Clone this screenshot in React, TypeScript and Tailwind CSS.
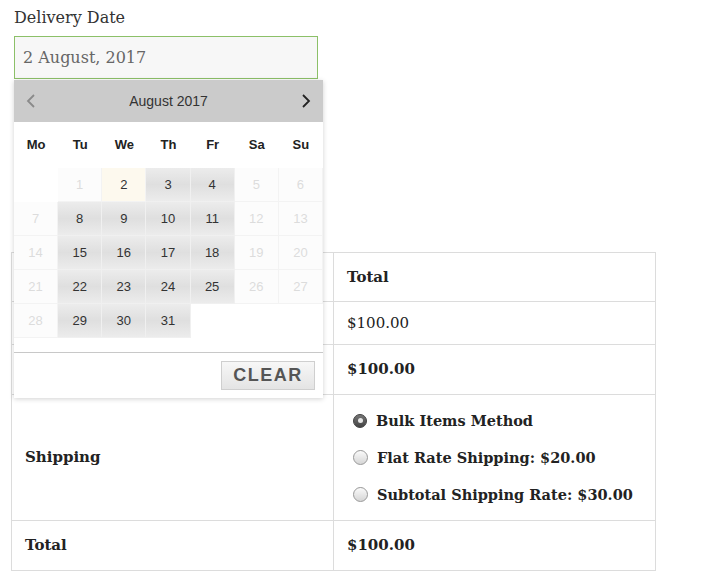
import React from 'react';

const serif = { fontFamily: '"DejaVu Serif", "Liberation Serif", serif' };
const sans = { fontFamily: '"Liberation Sans", Arial, sans-serif' };

const weekDays = ['Mo', 'Tu', 'We', 'Th', 'Fr', 'Sa', 'Su'];

// null = empty cell, otherwise [day, enabled]
const weeks: (null | [number, boolean])[][] = [
  [null, [1, false], [2, true], [3, true], [4, true], [5, false], [6, false]],
  [[7, false], [8, true], [9, true], [10, true], [11, true], [12, false], [13, false]],
  [[14, false], [15, true], [16, true], [17, true], [18, true], [19, false], [20, false]],
  [[21, false], [22, true], [23, true], [24, true], [25, true], [26, false], [27, false]],
  [[28, false], [29, true], [30, true], [31, true], null, null, null],
];

function DayCell({ cell }: { cell: null | [number, boolean] }) {
  if (!cell) {
    return <div className="h-[34px] bg-white" />;
  }
  const [day, enabled] = cell;
  if (day === 2) {
    return (
      <div className="h-[34px] flex items-center justify-center bg-[#fdf9ee] text-[13px] text-[#333] border-r border-b border-[#f3f3f3]">
        {day}
      </div>
    );
  }
  if (enabled) {
    return (
      <div className="h-[34px] flex items-center justify-center bg-gradient-to-b from-[#ececec] via-[#dfdfdf] to-[#ececec] text-[13px] text-[#333] border-r border-b border-[#f0f0f0]">
        {day}
      </div>
    );
  }
  return (
    <div className="h-[34px] flex items-center justify-center bg-[#fcfcfc] text-[13px] text-[#dcdcdc] border-r border-b border-[#f3f3f3]">
      {day}
    </div>
  );
}

function Calendar() {
  return (
    <div
      className="absolute left-[14px] top-[80px] w-[309px] bg-white shadow-[0_1px_5px_rgba(0,0,0,0.18)] z-10"
      style={sans}
    >
      <div className="h-[42px] bg-[#cbcbcb] flex items-center justify-between px-[10px]">
        <svg width="14" height="16" viewBox="0 0 14 16" fill="none">
          <path d="M10 2 L4 8 L10 14" stroke="#8a8a8a" strokeWidth="1.8" />
        </svg>
        <span className="text-[14px] text-[#333]">August 2017</span>
        <svg width="14" height="16" viewBox="0 0 14 16" fill="none">
          <path d="M4 2 L10 8 L4 14" stroke="#222" strokeWidth="1.8" />
        </svg>
      </div>
      <div className="grid grid-cols-7 h-[46px] items-center">
        {weekDays.map((d) => (
          <div key={d} className="text-center text-[13px] font-bold text-[#222]">
            {d}
          </div>
        ))}
      </div>
      <div className="grid grid-cols-7">
        {weeks.flat().map((cell, i) => (
          <DayCell key={i} cell={cell} />
        ))}
      </div>
      <div className="h-[14px]" />
      <div className="border-t border-[#c8c8c8] h-[46px] flex items-center justify-end pr-[8px]">
        <button
          type="button"
          className="w-[94px] h-[29px] border border-[#cfcfcf] bg-gradient-to-b from-[#f7f7f7] to-[#e4e4e4] text-[18px] font-bold tracking-[1.5px] text-[#555]"
        >
          CLEAR
        </button>
      </div>
    </div>
  );
}

function Radio({ checked }: { checked?: boolean }) {
  if (checked) {
    return (
      <span className="w-[14px] h-[14px] rounded-full bg-gradient-to-b from-[#777] to-[#444] border border-[#444] flex items-center justify-center flex-shrink-0">
        <span className="w-[5px] h-[5px] rounded-full bg-[#e8e8e8]" />
      </span>
    );
  }
  return (
    <span className="w-[15px] h-[15px] rounded-full bg-gradient-to-b from-[#fafafa] to-[#d6d6d6] border border-[#999] flex-shrink-0" />
  );
}

export default function App() {
  return (
    <div className="relative w-[704px] h-[582px] bg-white text-[#222] px-[11px]" style={serif}>
      <div className="pl-[3px] pt-[8px]">
        <label className="block text-[16px] leading-[20px] text-[#333]">Delivery Date</label>
        <div className="mt-[8px] w-[304px] h-[43px] border border-[#8cc068] bg-[#f7f7f7] flex items-center px-[8px] text-[16px] text-[#666]">
          2 August, 2017
        </div>
      </div>

      <Calendar />

      {/* order heading sits hidden under the calendar */}
      <div className="mt-[112px] h-[24px]" />

      <table className="mt-[37px] w-[645px] border-collapse border border-[#dcdcdc] text-[15px]">
        <tbody>
          <tr className="h-[49px]">
            <th className="w-[322px] border border-[#dcdcdc] px-[13px]" />
            <th className="border border-[#dcdcdc] text-left font-bold px-[13px]">Total</th>
          </tr>
          <tr className="h-[43px]">
            <td className="border border-[#dcdcdc] px-[13px]" />
            <td className="border border-[#dcdcdc] px-[13px]">$100.00</td>
          </tr>
          <tr className="h-[50px]">
            <th className="border border-[#dcdcdc] px-[13px]" />
            <td className="border border-[#dcdcdc] px-[13px] font-bold">$100.00</td>
          </tr>
          <tr className="h-[126px]">
            <th className="border border-[#dcdcdc] text-left font-bold px-[13px]">Shipping</th>
            <td className="border border-[#dcdcdc] px-[19px]">
              <div className="flex flex-col gap-[15px] font-bold text-[14.5px] whitespace-nowrap">
                <div className="flex items-center gap-[9px] leading-[22px]">
                  <Radio checked />
                  <span>Bulk Items Method</span>
                </div>
                <div className="flex items-center gap-[9px] leading-[22px]">
                  <Radio />
                  <span>Flat Rate Shipping: $20.00</span>
                </div>
                <div className="flex items-center gap-[9px] leading-[22px]">
                  <Radio />
                  <span>Subtotal Shipping Rate: $30.00</span>
                </div>
              </div>
            </td>
          </tr>
          <tr className="h-[50px]">
            <th className="border border-[#dcdcdc] text-left font-bold px-[13px]">Total</th>
            <td className="border border-[#dcdcdc] px-[13px] font-bold">$100.00</td>
          </tr>
        </tbody>
      </table>
    </div>
  );
}
